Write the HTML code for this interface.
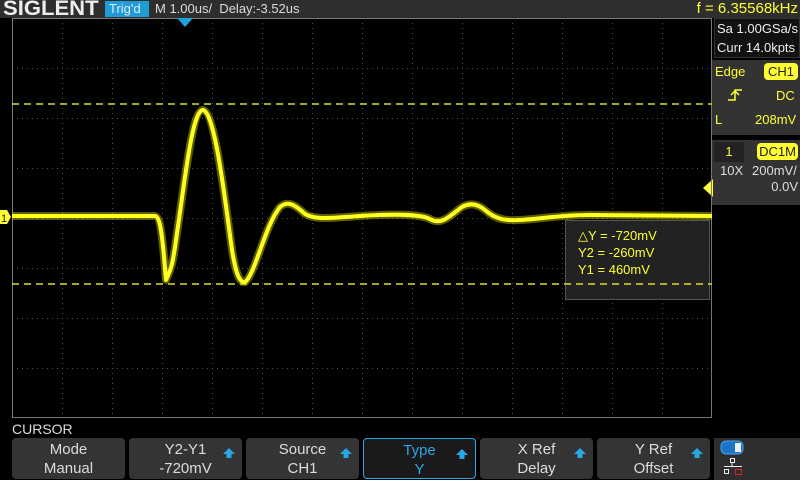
<!DOCTYPE html>
<html><head><meta charset="utf-8"><style>
*{margin:0;padding:0;box-sizing:border-box}
body{width:800px;height:480px;background:#000;overflow:hidden;position:relative;font-family:"Liberation Sans",sans-serif}
.a{position:absolute;white-space:nowrap}
.btn{position:absolute;top:438px;height:41px;width:113px;background:#343434;border-radius:4px;color:#ddd;font-size:15px;text-align:center;line-height:19px;padding-top:2px}
.y{color:#ffff33}
.ar{position:absolute;right:6px;top:9px;width:14px;height:14px}
</style></head><body>
<div class="a" style="left:0;top:0;width:800px;height:18px;background:#2e2e2e"></div>
<div class="a" style="left:3px;top:-3px;font-size:21px;font-weight:bold;color:#eee;transform:scaleX(1.05);transform-origin:left">SIGLENT</div>
<div class="a" style="left:105px;top:1px;width:44px;height:16px;background:#1f9bd6;color:#ddeeff;font-size:13px;line-height:16px;padding-left:4px">Trig'd</div>
<div class="a" style="left:155px;top:1px;font-size:13px;color:#ddd;line-height:16px">M 1.00us/&nbsp; Delay:-3.52us</div>
<div class="a y" style="left:660px;top:0px;font-size:15px;line-height:18px;width:138px;text-align:right">f = 6.35568kHz</div>
<div class="a" style="left:714px;top:18px;width:86px;height:40px;background:#111;border:1px solid #333;color:#eee;font-size:13px;line-height:19px;padding-left:2px">Sa 1.00GSa/s<br>Curr 14.0kpts</div>
<div class="a" style="left:712px;top:60px;width:88px;height:75px;background:#333"></div>
<div class="a y" style="left:715px;top:64px;font-size:13px">Edge</div>
<div class="a" style="left:764px;top:63px;width:34px;height:17px;background:#ffff33;border-radius:4px;color:#222;font-size:13px;text-align:center;line-height:17px">CH1</div>
<svg class="a" style="left:727px;top:87px" width="16" height="16"><path d="M1 13 H8 V3 H15 M4 8 L8 4 L12 8" fill="none" stroke="#ffff33" stroke-width="1.5"/></svg>
<div class="a y" style="left:776px;top:88px;font-size:13px">DC</div>
<div class="a y" style="left:715px;top:112px;font-size:13px">L</div>
<div class="a y" style="left:755px;top:112px;font-size:13px">208mV</div>
<div class="a" style="left:712px;top:140px;width:88px;height:65px;background:#333"></div>
<div class="a y" style="left:714px;top:142px;width:30px;height:20px;background:#222;font-size:13px;text-align:center;line-height:20px">1</div>
<div class="a" style="left:757px;top:143px;width:41px;height:17px;background:#ffff33;border-radius:4px;color:#222;font-size:13px;text-align:center;line-height:17px">DC1M</div>
<div class="a" style="left:720px;top:163px;font-size:13px;color:#ddd">10X</div>
<div class="a" style="left:752px;top:163px;font-size:13px;color:#ddd">200mV/</div>
<div class="a" style="left:768px;top:179px;font-size:13px;color:#ddd;width:30px;text-align:right">0.0V</div>
<div class="a" style="left:703px;top:179px;width:0;height:0;border-top:9px solid transparent;border-bottom:9px solid transparent;border-right:10px solid #ffff33"></div>
<svg class="a" style="left:0;top:0" width="800" height="480">
<g stroke="#555" stroke-width="1" stroke-dasharray="1,4">
<line x1="62.5" y1="18" x2="62.5" y2="418"/><line x1="112.5" y1="18" x2="112.5" y2="418"/><line x1="162.5" y1="18" x2="162.5" y2="418"/><line x1="212.5" y1="18" x2="212.5" y2="418"/><line x1="262.5" y1="18" x2="262.5" y2="418"/><line x1="312.5" y1="18" x2="312.5" y2="418"/><line x1="362.5" y1="18" x2="362.5" y2="418"/><line x1="412.5" y1="18" x2="412.5" y2="418"/><line x1="462.5" y1="18" x2="462.5" y2="418"/><line x1="512.5" y1="18" x2="512.5" y2="418"/><line x1="562.5" y1="18" x2="562.5" y2="418"/><line x1="612.5" y1="18" x2="612.5" y2="418"/><line x1="662.5" y1="18" x2="662.5" y2="418"/>
<line x1="12" y1="68.5" x2="712" y2="68.5"/><line x1="12" y1="118.5" x2="712" y2="118.5"/><line x1="12" y1="168.5" x2="712" y2="168.5"/><line x1="12" y1="218.5" x2="712" y2="218.5"/><line x1="12" y1="268.5" x2="712" y2="268.5"/><line x1="12" y1="318.5" x2="712" y2="318.5"/><line x1="12" y1="368.5" x2="712" y2="368.5"/>
</g>
<rect x="12.5" y="18.5" width="699" height="399" fill="none" stroke="#777"/>
<rect x="565.5" y="220.5" width="144" height="79" fill="#262626" fill-opacity="0.9" stroke="#555"/>
<g stroke="#dddd33" stroke-width="1.5" stroke-dasharray="7,5"><line x1="12" y1="104" x2="712" y2="104"/><line x1="12" y1="284" x2="712" y2="284"/></g>
<g fill="none" stroke-linejoin="round">
<path id="tr" d="M12 216 L155 216 C160 217 162 230 166 280 C170 270 172 270 176 240 C185 180 192 110 203 110 C215 112 225 200 232 250 C236 275 240 283 245 282 C255 275 265 225 280 207 C288 200 295 205 305 214 C315 220 330 218 360 216 C390 214 420 214 430 219 C440 225 448 218 458 210 C466 203 475 202 485 210 C495 219 505 221 520 220 C540 219 560 215 590 215 L712 216" stroke="#cccc00" stroke-width="8" opacity="0.45"/>
<path d="M12 216 L155 216 C160 217 162 230 166 280 C170 270 172 270 176 240 C185 180 192 110 203 110 C215 112 225 200 232 250 C236 275 240 283 245 282 C255 275 265 225 280 207 C288 200 295 205 305 214 C315 220 330 218 360 216 C390 214 420 214 430 219 C440 225 448 218 458 210 C466 203 475 202 485 210 C495 219 505 221 520 220 C540 219 560 215 590 215 L712 216" stroke="#ffff22" stroke-width="4"/>
</g>
<polygon points="0,210 7,210 11,217 7,224 0,224" fill="#ffff33"/>
<text x="1" y="222" font-size="11" font-family="Liberation Sans" fill="#222">1</text>
<polygon points="177,18 193,18 185,27" fill="#1fa3e0"/>
<rect x="721" y="441" width="22" height="13" rx="5" fill="#1a74c8" stroke="#4aa0f0"/>
<rect x="735" y="443" width="6" height="9" fill="#eee"/>
<g stroke="#eee" fill="none"><rect x="730.5" y="458.5" width="4" height="4"/><line x1="732" y1="463" x2="732" y2="466"/><line x1="724" y1="466.5" x2="742" y2="466.5"/><rect x="724.5" y="469.5" width="4" height="4"/></g>
<rect x="735.5" y="469.5" width="6" height="5" fill="none" stroke="#d22"/>
</svg>
<div class="a y" style="left:578px;top:227px;font-size:13px;line-height:17px">△Y = -720mV<br>Y2 = -260mV<br>Y1 = 460mV</div>
<div class="a" style="left:12px;top:421px;font-size:14px;color:#ddd">CURSOR</div>
<div class="btn" style="left:12px">Mode<br>Manual</div>
<div class="btn" style="left:129px">Y2-Y1<br>-720mV<svg class="ar" viewBox="0 0 14 14"><path d="M7 1 L13 7 H9.5 V11 H4.5 V7 H1 Z" fill="#29a8e8"/></svg></div>
<div class="btn" style="left:246px">Source<br>CH1<svg class="ar" viewBox="0 0 14 14"><path d="M7 1 L13 7 H9.5 V11 H4.5 V7 H1 Z" fill="#29a8e8"/></svg></div>
<div class="btn" style="left:363px;border:1px solid #29a8e8;background:#1a1a1a;color:#29a8e8">Type<br>Y<svg class="ar" viewBox="0 0 14 14"><path d="M7 1 L13 7 H9.5 V11 H4.5 V7 H1 Z" fill="#29a8e8"/></svg></div>
<div class="btn" style="left:480px">X Ref<br>Delay<svg class="ar" viewBox="0 0 14 14"><path d="M7 1 L13 7 H9.5 V11 H4.5 V7 H1 Z" fill="#29a8e8"/></svg></div>
<div class="btn" style="left:597px">Y Ref<br>Offset<svg class="ar" viewBox="0 0 14 14"><path d="M7 1 L13 7 H9.5 V11 H4.5 V7 H1 Z" fill="#29a8e8"/></svg></div>
<div class="a" style="left:714px;top:438px;width:86px;height:42px;background:#2e2e2e;z-index:-1"></div>
</body></html>
